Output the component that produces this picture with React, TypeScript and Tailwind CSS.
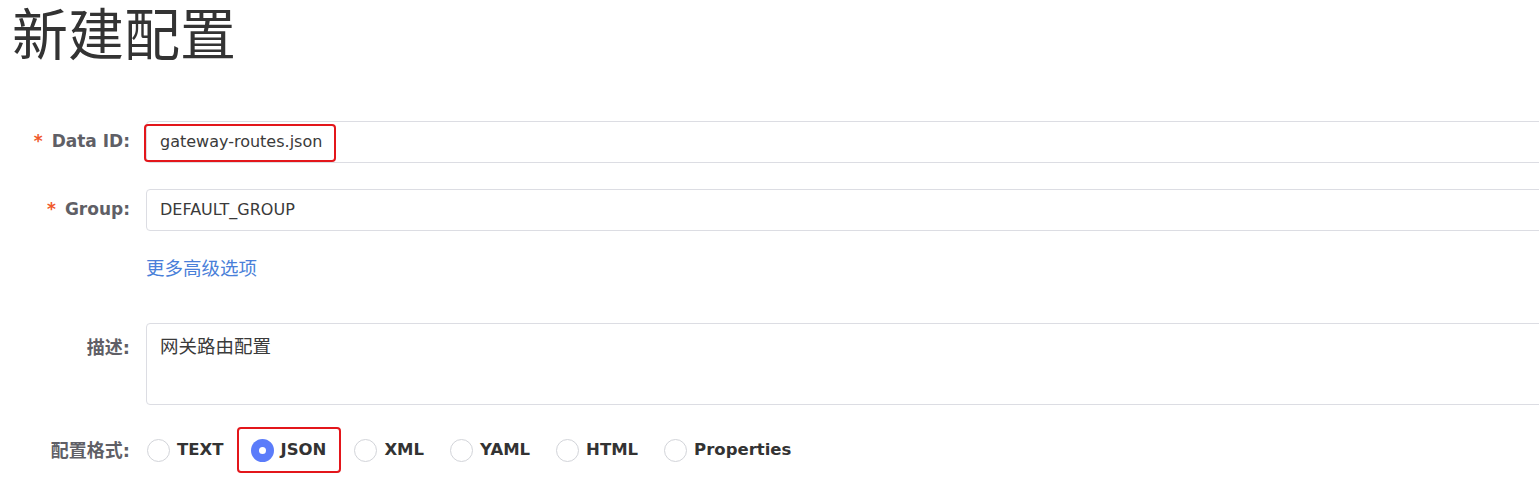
import React from 'react';

const formats = ['TEXT', 'JSON', 'XML', 'YAML', 'HTML', 'Properties'];

function Label({ text, required, top, cjk }: { text: string; required?: boolean; top?: boolean; cjk?: boolean }) {
  return (
    <div
      className={`w-[130px] shrink-0 flex justify-end font-bold text-[#5f5f66] ${
        top ? 'items-start pt-[11px]' : 'items-center'
      }`}
    >
      {required && <span className="text-[#f0592b] mr-[9px] text-[17px]">*</span>}
      <span className={cjk ? 'text-[18px]' : 'text-[17px]'}>{text}</span>
    </div>
  );
}

function Radio({ label, checked }: { label: string; checked?: boolean }) {
  return (
    <div className="flex items-center gap-[7px]">
      {checked ? (
        <span className="w-[23px] h-[23px] rounded-full bg-[#5b7cfa] flex items-center justify-center">
          <span className="w-[7px] h-[7px] rounded-full bg-white" />
        </span>
      ) : (
        <span className="w-[23px] h-[23px] rounded-full border border-[#d2d4d9] bg-white" />
      )}
      <span className="text-[16.5px] font-bold text-[#333333]">{label}</span>
    </div>
  );
}

export default function App() {
  return (
    <div
      className="w-[1539px] h-[482px] bg-white overflow-hidden text-[#333333]"
      style={{ fontFamily: '"DejaVu Sans", "Noto Sans CJK SC", sans-serif' }}
    >
      <h1 className="pl-[12px] pt-[6px] text-[56px] leading-[60px] font-normal text-[#333333]">新建配置</h1>

      <div className="mt-[55px] flex flex-col">
        {/* Data ID */}
        <div className="flex h-[42px]">
          <Label text="Data ID:" required />
          <div className="relative ml-[16px] flex-1 -mr-[20px] border border-[#dcdde3] rounded-[4px] flex items-center pl-[13px] text-[16px] text-[#3a3a3a]">
            gateway-routes.json
            <div className="absolute left-[-3px] top-[2px] w-[192px] h-[38px] border-2 border-[#e3161b] rounded-[4px]" />
          </div>
        </div>

        {/* Group */}
        <div className="flex h-[42px] mt-[26px]">
          <Label text="Group:" required />
          <div className="ml-[16px] flex-1 -mr-[20px] border border-[#dcdde3] rounded-[4px] flex items-center pl-[13px] text-[16px] text-[#3a3a3a]">
            DEFAULT_GROUP
          </div>
        </div>

        {/* advanced */}
        <div className="flex h-[24px] mt-[26px] items-center">
          <div className="w-[146px] shrink-0" />
          <span className="text-[18.5px] text-[#4a7fd9]">更多高级选项</span>
        </div>

        {/* description */}
        <div className="flex h-[82px] mt-[42px]">
          <Label text="描述:" top cjk />
          <div className="ml-[16px] flex-1 -mr-[20px] border border-[#dcdde3] rounded-[4px] pl-[13px] pt-[11px] text-[18.5px] leading-[24px] text-[#3a3a3a]">
            网关路由配置
          </div>
        </div>

        {/* format */}
        <div className="flex h-[46px] mt-[22px]">
          <Label text="配置格式:" cjk />
          <div className="ml-[17px] flex items-center gap-[26px]">
            {formats.map((f) =>
              f === 'JSON' ? (
                <div
                  key={f}
                  className="-ml-[13px] -mr-[13px] pl-[12px] pr-[13px] h-[46px] flex items-center border-2 border-[#e3161b] rounded-[4px]"
                >
                  <Radio label={f} checked />
                </div>
              ) : (
                <Radio key={f} label={f} />
              )
            )}
          </div>
        </div>
      </div>
    </div>
  );
}
